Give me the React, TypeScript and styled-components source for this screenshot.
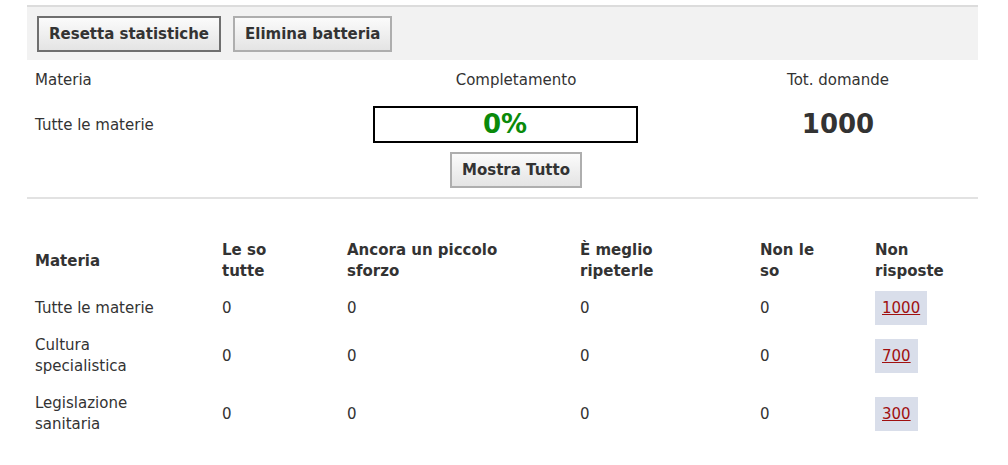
import React from "react";
import styled, { createGlobalStyle } from "styled-components";

const GlobalStyle = createGlobalStyle`
  html, body { margin: 0; padding: 0; background: #fff; }
  body {
    font-family: "DejaVu Sans", Tahoma, Verdana, sans-serif;
    font-size: 15px;
    color: #333;
  }
`;

const Page = styled.div`
  width: 951px;
  margin-left: 27px;
  padding-top: 5px;
`;

const Toolbar = styled.div`
  display: flex;
  gap: 12px;
  align-items: center;
  border-top: 2px solid #dcdcdc;
  background: #f2f2f2;
  height: 55px;
  box-sizing: border-box;
  padding: 0 10px;
`;

const Button = styled.button<{ $focused?: boolean }>`
  height: 36px;
  padding: 0 10px;
  font-family: "DejaVu Sans", Tahoma, Verdana, sans-serif;
  font-size: 15px;
  font-weight: bold;
  color: #333;
  background: linear-gradient(#fbfbfb, #e4e4e4);
  border: 2px solid ${(p) => (p.$focused ? "#6f6f6f" : "#aeaeae")};
  border-radius: 0;
  cursor: pointer;
`;

const Summary = styled.div`
  display: grid;
  grid-template-columns: 307px 364px 1fr;
  grid-template-rows: 21px 37px auto;
  row-gap: 15px;
  padding-top: 10px;
  line-height: 21px;
`;

const Cell = styled.div<{ $align?: "left" | "center"; $drop?: number }>`
  display: flex;
  align-items: center;
  justify-content: ${(p) => (p.$align === "center" ? "center" : "flex-start")};
  padding-left: ${(p) => (p.$align === "center" ? "0" : "8px")};
  padding-top: ${(p) => p.$drop ?? 0}px;
`;

const ProgressBox = styled.div`
  width: 265px;
  height: 37px;
  box-sizing: border-box;
  border: 2px solid #000;
  margin-right: 22px;
  display: flex;
  align-items: center;
  justify-content: center;
  font-size: 26px;
  font-weight: bold;
  color: #0a8a0a;
`;

const BigNumber = styled.div`
  font-size: 26px;
  font-weight: bold;
  color: #333;
`;

const ActionRow = styled.div`
  grid-column: 2;
  display: flex;
  justify-content: center;
  margin-top: -6px;
`;

const Separator = styled.div`
  height: 2px;
  background: #e2e2e2;
  margin-top: 9px;
`;

const Table = styled.table`
  width: 951px;
  margin-top: 33px;
  border-collapse: collapse;
  table-layout: fixed;
  line-height: 21px;
`;

const Th = styled.th`
  text-align: left;
  font-weight: bold;
  padding: 8px;
  vertical-align: middle;
`;

const Td = styled.td`
  padding: 8px;
  vertical-align: middle;
`;

const CountLink = styled.a`
  color: #a01010;
  text-decoration: underline;
  background: #d9deea;
  padding: 8px 7px;
`;

const columns = [187, 125, 233, 180, 115, 111];

const rows = [
  { name: ["Tutte le materie"], values: [0, 0, 0, 0], open: 1000 },
  { name: ["Cultura", "specialistica"], values: [0, 0, 0, 0], open: 700 },
  { name: ["Legislazione", "sanitaria"], values: [0, 0, 0, 0], open: 300 },
];

const headers = [
  ["Materia"],
  ["Le so", "tutte"],
  ["Ancora un piccolo", "sforzo"],
  ["È meglio", "ripeterle"],
  ["Non le", "so"],
  ["Non", "risposte"],
];

const Lines = ({ parts }: { parts: string[] }) => (
  <>
    {parts.map((p, i) => (
      <React.Fragment key={i}>
        {i > 0 && <br />}
        {p}
      </React.Fragment>
    ))}
  </>
);

export default function App() {
  return (
    <>
      <GlobalStyle />
      <Page>
        <Toolbar>
          <Button $focused>Resetta statistiche</Button>
          <Button>Elimina batteria</Button>
        </Toolbar>
        <Summary>
          <Cell>Materia</Cell>
          <Cell $align="center">Completamento</Cell>
          <Cell $align="center">Tot. domande</Cell>
          <Cell $drop={2}>Tutte le materie</Cell>
          <Cell $align="center">
            <ProgressBox>0%</ProgressBox>
          </Cell>
          <Cell $align="center">
            <BigNumber>1000</BigNumber>
          </Cell>
          <ActionRow>
            <Button>Mostra Tutto</Button>
          </ActionRow>
        </Summary>
        <Separator />
        <Table>
          <colgroup>
            {columns.map((w, i) => (
              <col key={i} style={{ width: w }} />
            ))}
          </colgroup>
          <thead>
            <tr>
              {headers.map((h, i) => (
                <Th key={i}>
                  <Lines parts={h} />
                </Th>
              ))}
            </tr>
          </thead>
          <tbody>
            {rows.map((r, i) => (
              <tr key={i}>
                <Td>
                  <Lines parts={r.name} />
                </Td>
                {r.values.map((v, j) => (
                  <Td key={j}>{v}</Td>
                ))}
                <Td>
                  <CountLink href="#">{r.open}</CountLink>
                </Td>
              </tr>
            ))}
          </tbody>
        </Table>
      </Page>
    </>
  );
}
